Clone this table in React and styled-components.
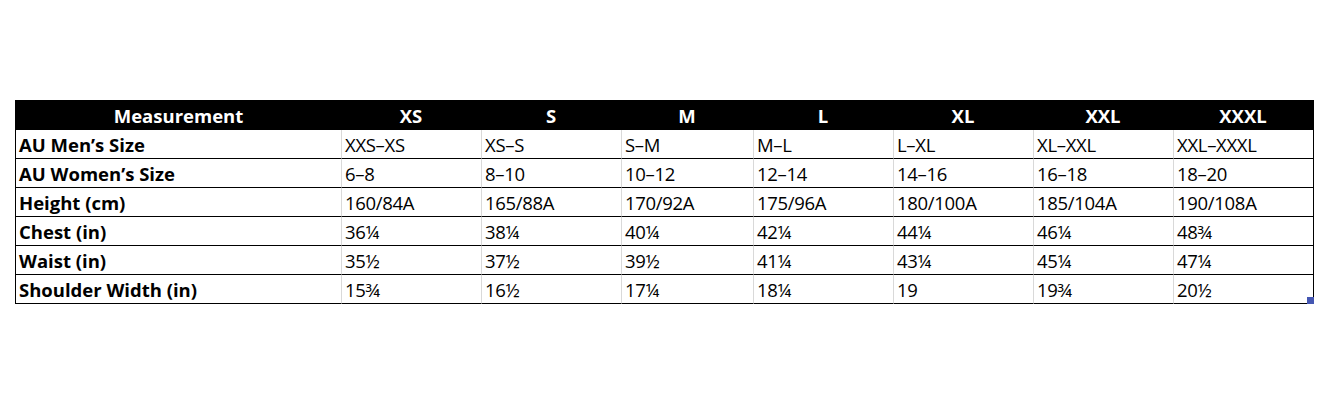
import React from 'react'
import styled, { createGlobalStyle } from 'styled-components'

const GlobalStyle = createGlobalStyle`
  html, body {
    margin: 0;
    padding: 0;
    background: #ffffff;
  }
  body {
    font-family: 'Open Sans', 'Liberation Sans', sans-serif;
    color: #000;
  }
`

const Page = styled.div`
  width: 1330px;
  height: 403px;
  padding: 100px 0 0 15px;
  box-sizing: border-box;
`

const Sheet = styled.div`
  position: relative;
  display: grid;
  grid-template-columns: 325px 140px 140px 132px 140px 140px 140px 140px;
  width: max-content;
  border-left: 1px solid #000;
  border-right: 1px solid #000;
`

const HeadCell = styled.div`
  height: 30px;
  background: #000;
  color: #fff;
  font-weight: 700;
  font-size: 18.5px;
  display: flex;
  align-items: center;
  justify-content: center;
  box-sizing: border-box;
`

const Cell = styled.div`
  height: 29px;
  box-sizing: border-box;
  border-bottom: 1px solid #000;
  border-left: ${({ $first }) => ($first ? 'none' : '1px solid #d9d9d9')};
  padding: 2px 0 0 3px;
  font-size: 18.5px;
  letter-spacing: ${({ $first }) => ($first ? '0' : '-0.3px')};
  font-weight: ${({ $first }) => ($first ? 700 : 400)};
  white-space: nowrap;
  line-height: 25px;
`

const Handle = styled.div`
  position: absolute;
  right: -1px;
  bottom: 0;
  width: 7px;
  height: 7px;
  background: #4456b2;
`

const sizes = ['XS', 'S', 'M', 'L', 'XL', 'XXL', 'XXXL']

const rows = [
  ['AU Men’s Size', 'XXS–XS', 'XS–S', 'S–M', 'M–L', 'L–XL', 'XL–XXL', 'XXL–XXXL'],
  ['AU Women’s Size', '6–8', '8–10', '10–12', '12–14', '14–16', '16–18', '18–20'],
  ['Height (cm)', '160/84A', '165/88A', '170/92A', '175/96A', '180/100A', '185/104A', '190/108A'],
  ['Chest (in)', '36¼', '38¼', '40¼', '42¼', '44¼', '46¼', '48¾'],
  ['Waist (in)', '35½', '37½', '39½', '41¼', '43¼', '45¼', '47¼'],
  ['Shoulder Width (in)', '15¾', '16½', '17¼', '18¼', '19', '19¾', '20½'],
]

const App = () => {
  return (
    <Page>
      <GlobalStyle />
      <Sheet>
        <HeadCell>Measurement</HeadCell>
        {sizes.map((size) => (
          <HeadCell key={size}>{size}</HeadCell>
        ))}
        {rows.map((row) =>
          row.map((value, i) => (
            <Cell key={row[0] + i} $first={i === 0}>
              {value}
            </Cell>
          ))
        )}
        <Handle />
      </Sheet>
    </Page>
  )
}

export default App
